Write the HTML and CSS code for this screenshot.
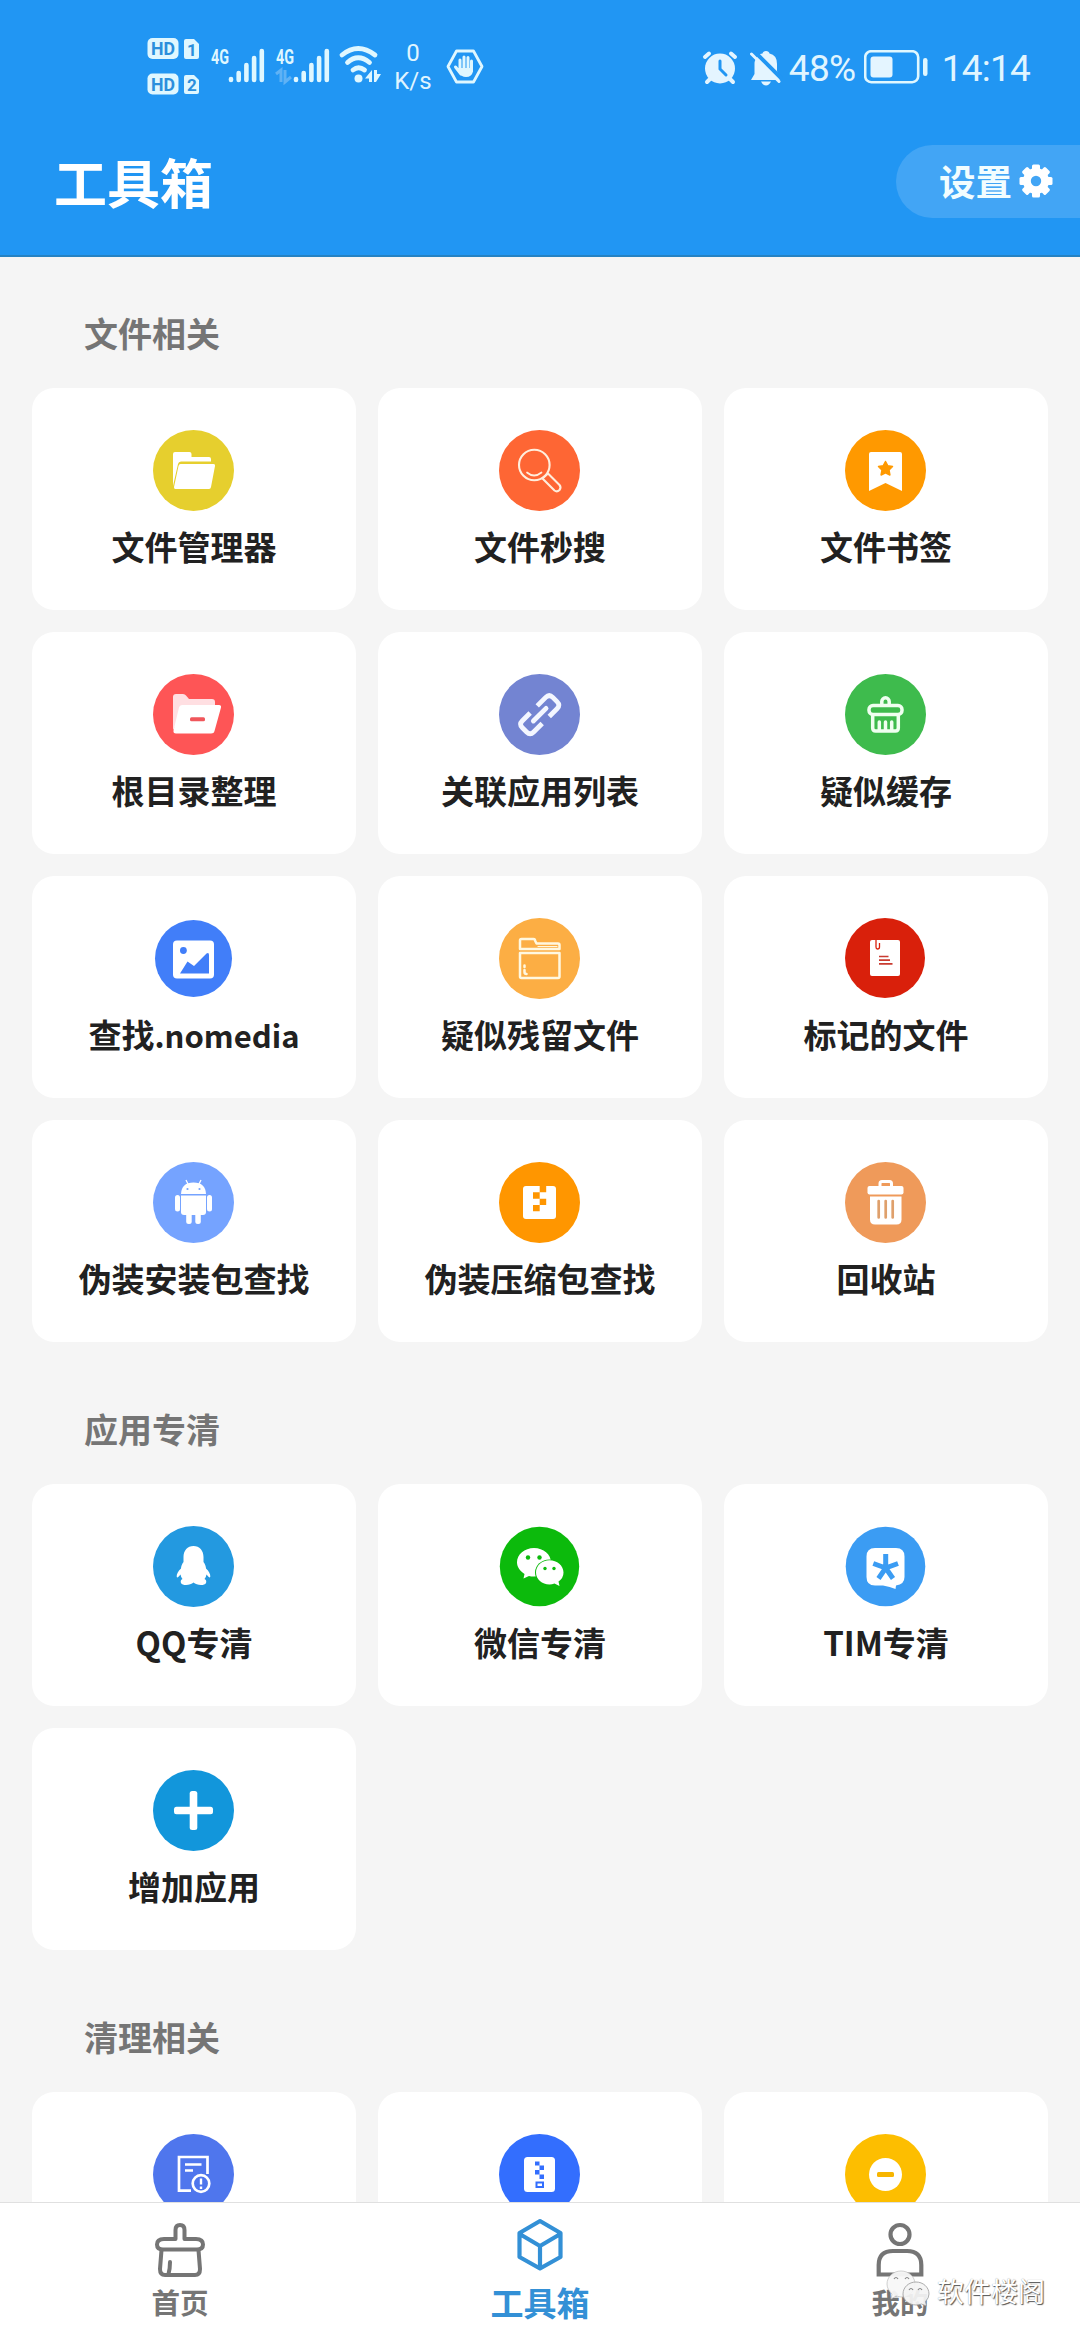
FILE: index.html
```html
<!DOCTYPE html>
<html lang="zh-CN">
<head>
<meta charset="utf-8">
<title>工具箱</title>
<link rel="stylesheet" href="styles.css">
</head>
<body>
<div class="app">
  <header class="header">
    <div class="status">
      <div class="status-left">
        <svg class="signals" width="234" height="60" viewBox="0 0 234 60">
          <g fill="#dff7ff">
            <rect x="0.5" y="5" width="31" height="21" rx="5"/>
            <rect x="0.5" y="41" width="31" height="21" rx="5" transform="translate(0 -0.5)"/>
            <path d="M39 6H47L52 11V24Q52 26 50 26H39Q37 26 37 24V8Q37 6 39 6Z"/>
            <path d="M39 42H47L52 47V59Q52 61 50 61H39Q37 61 37 59V44Q37 42 39 42Z"/>
          </g>
          <g class="tiny" fill="#2b8fdc">
            <text x="4" y="22" textLength="24" lengthAdjust="spacingAndGlyphs">HD</text>
            <text x="4" y="57.500" textLength="24" lengthAdjust="spacingAndGlyphs">HD</text>
            <text x="40" y="23" class="num">1</text>
            <text x="40" y="58" class="num">2</text>
          </g>
          <g class="net" fill="#dff7ff">
            <text x="64" y="31" textLength="18" lengthAdjust="spacingAndGlyphs">4G</text>
            <text x="129" y="31" textLength="18" lengthAdjust="spacingAndGlyphs">4G</text>
          </g>
          <g stroke="#dff7ff" stroke-width="4.600" stroke-linecap="round">
            <path d="M84 47V46M91.700 47V40M99.400 47V32M107.100 47V25M114.800 47V18"/>
            <path d="M149 47V46M156.700 47V40M164.400 47V32M172.100 47V25M179.800 47V18"/>
          </g>
          <path d="M129 41L134 37V49M138 37V49L144 44" fill="none" stroke="#5fb2f5" stroke-width="3"/>
          <g fill="none" stroke="#dff7ff" stroke-width="4.800" stroke-linecap="round">
            <path d="M195 22Q211 9 228 22"/>
            <path d="M200.500 29.500Q211 20 222.500 29.500"/>
            <path d="M206 37Q211.500 32.500 217.500 37"/>
          </g>
          <circle cx="211.500" cy="45.500" r="4" fill="#dff7ff"/>
          <path d="M218 45.500L225 37V49H222V45.500ZM227 49V37H230V41H234L229 49Z" fill="#dff7ff"/>
        </svg>
        <div class="speed"><span>0</span><span>K/s</span></div>
        <svg width="38" height="38" viewBox="0 0 38 38">
          <path d="M10.500 3H27.500L36 18.500L27.500 34H10.500L2 18.500Z" fill="none" stroke="#dff7ff" stroke-width="2.800" stroke-linejoin="round"/>
          <g stroke="#dff7ff" stroke-width="3" stroke-linecap="round">
            <path d="M14 12V23M18 9V23M22 9.500V23M25.500 13V23M9.500 19L15 26"/>
          </g>
          <path d="M12.500 20H27V23Q26 29 20 29Q15 29 12.500 24Z" fill="#dff7ff"/>
        </svg>
      </div>
      <div class="status-right">
        <svg width="36" height="36" viewBox="0 0 36 36">
          <g fill="none" stroke="#e4f5ff" stroke-width="4" stroke-linecap="round"><path d="M3 7L7 3.500M33 7L29 3.500M9 28L5 32M27 28L31 32"/></g>
          <circle cx="18" cy="18.500" r="15" fill="#e4f5ff"/>
          <path d="M18 11V19L24 25" fill="none" stroke="#2196f3" stroke-width="3" stroke-linecap="round"/>
        </svg>
        <svg class="bell" width="34" height="36" viewBox="0 0 34 36">
          <path d="M9.500 5.500Q11 3.500 13.500 3.500Q14 1 17 1Q20 1 20.500 3.500Q28 5 28 14V21L31 30H2L5.500 24V14Q5.500 9 9.500 5.500ZM12 31.500H22Q20 35.500 17 35.500Q14 35.500 12 31.500Z" fill="#e4f5ff"/>
          <path d="M6 2L33 29" stroke="#2196f3" stroke-width="4"/>
          <path d="M2.500 4L30 31.500" stroke="#e4f5ff" stroke-width="3" stroke-linecap="round"/>
        </svg>
        <span class="percent">48%</span>
        <svg class="battery" width="64" height="34" viewBox="0 0 64 34">
          <rect x="1.200" y="1.200" width="53" height="31" rx="6" fill="none" stroke="#dff7ff" stroke-width="2.600"/>
          <rect x="6.500" y="6.500" width="22" height="21" rx="3" fill="#e4f5ff"/>
          <rect x="59" y="8" width="4.500" height="18" rx="2.200" fill="#dff7ff"/>
        </svg>
        <span class="clock">14:14</span>
      </div>
    </div>
    <div class="appbar">
      <h1 class="title">工具箱</h1>
      <div class="settings">
        <span>设置</span>
        <svg width="34" height="34" viewBox="-17 -17 34 34">
          <g fill="#fff">
            <path fill-rule="evenodd" d="M-13 0A13 13 0 1 1 13 0A13 13 0 1 1 -13 0ZM-5.200 0A5.200 5.200 0 1 0 5.200 0A5.200 5.200 0 1 0 -5.200 0Z"/>
            <g id="teeth"><rect x="-4" y="-16.500" width="8" height="7" rx="1.500"/><rect x="-4" y="9.500" width="8" height="7" rx="1.500"/></g>
            <use href="#teeth" transform="rotate(45)"/><use href="#teeth" transform="rotate(90)"/><use href="#teeth" transform="rotate(135)"/>
          </g>
        </svg>
      </div>
    </div>
  </header>

  <main class="content">
    <h2 class="section">文件相关</h2>
    <div class="grid">
      <div class="card">
        <svg class="icon" viewBox="0 0 81 81"><circle cx="40.500" cy="40.500" r="40.500" fill="#e6cf2e"/>
          <path d="M20 56V24Q20 22 22 22H36.500Q38.500 22 38.500 24V27H56Q58 27 58 29V31.500H28Q25.500 31.500 25 34Z" fill="#fff"/>
          <path d="M27.500 34H60.500Q62.500 34 62 36L58 57Q57.700 59 56 59H22.500Q20.700 59 21 57L25.500 36Q26 34 27.500 34Z" fill="#fff"/></svg>
        <span class="label">文件管理器</span>
      </div>
      <div class="card">
        <svg class="icon" viewBox="0 0 81 81"><circle cx="40.500" cy="40.500" r="40.500" fill="#fe6634"/>
          <g fill="none" stroke="#ffeedd" stroke-width="2.100" stroke-linecap="round" stroke-linejoin="round"><circle cx="35.300" cy="35" r="15.300"/><path d="M28 42.500Q35 48.500 42.500 42.500" stroke-width="1.700"/><path d="M49 43.500L60.500 55Q62.500 57.500 60.500 60Q58 62.500 55.500 60.500L43.500 48.500Z"/></g></svg>
        <span class="label">文件秒搜</span>
      </div>
      <div class="card">
        <svg class="icon" viewBox="0 0 81 81"><circle cx="40.500" cy="40.500" r="40.500" fill="#ff9900"/>
          <path d="M26 22H55Q57 22 57 24V61L40.500 53L24 61V24Q24 22 26 22Z" fill="#fff"/>
          <path d="M40.500 31.500L42.800 35.800L47.500 36.500L44 40L44.900 45L40.500 42.800L36.100 45L37 40L33.500 36.500L38.200 35.800Z" fill="#ff9900" stroke="#ff9900" stroke-width="1.500" stroke-linejoin="round"/></svg>
        <span class="label">文件书签</span>
      </div>
      <div class="card">
        <svg class="icon" viewBox="0 0 81 81"><circle cx="40.500" cy="40.500" r="40.500" fill="#fe5556"/>
          <path d="M20 56V23Q20 20 23 20H30Q32 20 33 21.500L36 25H59Q62 25 62 28V50H24Z" fill="#ffdfe2"/>
          <path d="M29 31H66Q68.500 31 68 33.500L61.500 57Q61 59.500 58 59.500H23Q20 59.500 20.500 56.500L26 33.500Q26.500 31 29 31Z" fill="#fff"/>
          <rect x="37" y="43.200" width="15" height="4" rx="1.500" fill="#f0565b"/></svg>
        <span class="label">根目录整理</span>
      </div>
      <div class="card">
        <svg class="icon" viewBox="0 0 81 81"><circle cx="40.500" cy="40.500" r="40.500" fill="#7384d2"/>
          <g transform="translate(40.700 40.700) rotate(-45)" fill="none" stroke="#f3f6ff" stroke-width="4.800">
            <path d="M4.500 -8H16.500Q21.500 -8 21.500 -3V3Q21.500 8 16.500 8H5.500M-4.500 8H-16.500Q-21.500 8 -21.500 3V-3Q-21.500 -8 -16.500 -8H-5.500"/><path d="M-9 0H9" stroke-linecap="round"/></g></svg>
        <span class="label">关联应用列表</span>
      </div>
      <div class="card">
        <svg class="icon" viewBox="0 0 81 81"><circle cx="40.500" cy="40.500" r="40.500" fill="#3ebb4d"/>
          <g fill="none" stroke="#effff0" stroke-width="3.500" stroke-linecap="round"><path d="M36.800 31V27.500A3.700 3.700 0 0 1 44.200 27.500V31"/><rect x="24" y="31.500" width="33" height="9" rx="4"/><path d="M27.700 42V54Q27.700 57 30.700 57H50.300Q53.300 57 53.300 54V42M34.300 48V56M40.500 48V56M46.700 48V56"/></g></svg>
        <span class="label">疑似缓存</span>
      </div>
      <div class="card">
        <svg class="icon" viewBox="0 0 81 81"><circle cx="40.500" cy="40.500" r="38.500" fill="#417ef9"/>
          <rect x="20" y="22.500" width="41" height="38" rx="4" fill="#fff"/><circle cx="30.400" cy="32.500" r="3.400" fill="#417ef9"/><path d="M27 55.500L34.500 43.500L41 48L53.500 35.500Q56 34 56 37V55.500Z" fill="#417ef9"/></svg>
        <span class="label">查找<span class="latin">.nomedia</span></span>
      </div>
      <div class="card">
        <svg class="icon" viewBox="0 0 81 81"><circle cx="40.500" cy="40.500" r="40.500" fill="#fcae44"/>
          <g fill="none" stroke="#fff8e0" stroke-width="2.500" stroke-linejoin="round" stroke-linecap="round"><path d="M21 31V22.500Q21 21 22.500 21H34.500Q36 21 36 22.500L37.500 25.500H59Q60.500 25.500 60.500 27V31Z"/><path d="M39 28.500H58" stroke-width="1.200"/><path d="M21 35H60.500V58.500Q60.500 60 59 60H22.500Q21 60 21 58.500ZM25.500 47.500V49M25.500 52V54Q25.500 56 27.500 56"/></g></svg>
        <span class="label">疑似残留文件</span>
      </div>
      <div class="card">
        <svg class="icon" viewBox="0 0 81 81"><circle cx="40" cy="40" r="40" fill="#d9200b"/>
          <rect x="25" y="22" width="30" height="36" rx="2" fill="#fff"/><path d="M31 22V29Q31 31 32.500 31Q34.500 31 34.500 29V25" fill="none" stroke="#d9200b" stroke-width="1.300"/><path d="M34 38.500H43.500M34 42.200H45M34 45.900H47.500" stroke="#c93b30" stroke-width="1.700"/></svg>
        <span class="label">标记的文件</span>
      </div>
      <div class="card">
        <svg class="icon" viewBox="0 0 81 81"><circle cx="40.500" cy="40.500" r="40.500" fill="#75a3ff"/>
          <g fill="#fff"><path d="M28 32Q28.500 20.500 40.500 20.500Q52.500 20.500 53 32Z"/><path d="M28 33.500H53V50Q53 53 50 53H31Q28 53 28 50Z"/><rect x="22" y="33" width="5" height="16.500" rx="2.500"/><rect x="54" y="33" width="5" height="16.500" rx="2.500"/><rect x="33.200" y="49" width="5.500" height="13" rx="2.500"/><rect x="42.300" y="49" width="5.500" height="13" rx="2.500"/></g><path d="M33 18L35.500 23M48 18L45.500 23" stroke="#fff" stroke-width="1.300"/><circle cx="34.500" cy="27" r="1.100" fill="#75a3ff"/><circle cx="46.500" cy="27" r="1.100" fill="#75a3ff"/></svg>
        <span class="label">伪装安装包查找</span>
      </div>
      <div class="card">
        <svg class="icon" viewBox="0 0 81 81"><circle cx="40.500" cy="40.500" r="40.500" fill="#ff9600"/>
          <rect x="24" y="24" width="33" height="33" rx="3" fill="#fff"/><path d="M40.700 23.500H47.200V30.300H40.700ZM34 30.300H40.700V36.700H34ZM40.700 36.700H47.200V43H40.700ZM34 43H40.700V49.300H34Z" fill="#ff9600"/></svg>
        <span class="label">伪装压缩包查找</span>
      </div>
      <div class="card">
        <svg class="icon" viewBox="0 0 81 81"><circle cx="40.500" cy="40.500" r="40.500" fill="#ef9a5a"/>
          <rect x="22.500" y="24" width="36" height="8.500" rx="2" fill="#fff"/><path d="M35 25V21.500Q35 19.500 37 19.500H44.500Q46.500 19.500 46.500 21.500V25" fill="none" stroke="#fff" stroke-width="3"/><path d="M25 34.500H56.500V57.500Q56.500 62.500 51.500 62.500H30Q25 62.500 25 57.500Z" fill="#fff"/><path d="M33.700 39V55.500M40.700 39V55.500M47.700 39V55.500" stroke="#dfa06c" stroke-width="2.700" stroke-linecap="round"/></svg>
        <span class="label">回收站</span>
      </div>
    </div>

    <h2 class="section">应用专清</h2>
    <div class="grid">
      <div class="card">
        <svg class="icon" viewBox="0 0 81 81"><circle cx="40.500" cy="40.500" r="40.500" fill="#2399e0"/>
          <path d="M40.500 20C46.500 20 50.500 24.500 50.500 31V36C52 38 53 40.500 53 42.500C56 45 57.500 48.500 57.300 50.500Q57 53 53.500 48.500Q53 51.500 51.500 53C53.500 54 53.500 55.500 53 57C51.500 60 43.500 59.500 40.500 56.500C37.500 59.500 29.500 60 28 57C27.500 55.500 27.500 54 29.500 53Q28 51.500 27.500 48.500Q24 53 23.700 50.500C23.500 48.500 25 45 28 42.500C28 40.500 29 38 30.500 36V31C30.500 24.500 34.500 20 40.500 20Z" fill="#fff"/></svg>
        <span class="label">QQ专清</span>
      </div>
      <div class="card">
        <svg class="icon" viewBox="0 0 81 81"><circle cx="40.500" cy="40.500" r="39.700" fill="#0cba0c"/>
          <path d="M35 22C44.500 22 52 28.500 52 36.300C52 44 44.500 50.500 35 50.500Q32 50.500 30 50L24.500 52.500L25.500 48C21 45 18 41 18 36.300C18 28.500 25.500 22 35 22Z" fill="#fff"/><ellipse cx="50.500" cy="46.500" rx="14.500" ry="13.100" fill="#0cba0c"/>
          <path d="M50.500 34.300C58 34.300 64.500 39.700 64.500 46.500Q64.500 52 59.500 55.500L60.500 60L55.500 57.500Q53 58.500 50.500 58.500C43 58.500 37 53.200 37 46.500C37 39.700 43 34.300 50.500 34.300Z" fill="#fff"/>
          <g fill="#0cba0c"><circle cx="29" cy="31.500" r="2.200"/><circle cx="40.500" cy="31.500" r="2.200"/><circle cx="46" cy="42.500" r="1.700"/><circle cx="55" cy="42.500" r="1.700"/></g></svg>
        <span class="label">微信专清</span>
      </div>
      <div class="card">
        <svg class="icon" viewBox="0 0 81 81"><circle cx="40.500" cy="40.500" r="39.800" fill="#3b9cf3"/>
          <path d="M30 22H51Q59.500 22 59.500 30.500V51Q59.500 58.500 51 59.500L50.500 63Q45 60.500 38 59.500H30Q21.500 59.500 21.500 51V30.500Q21.500 22 30 22Z" fill="#fff"/>
          <path d="M40.700 42V28M40.700 42L53 37.500M40.700 42L48 52.500M40.700 42L33.500 52.500M40.700 42L28.300 37.500" stroke="#3b9cf3" stroke-width="5"/></svg>
        <span class="label">TIM专清</span>
      </div>
      <div class="card">
        <svg class="icon" viewBox="0 0 81 81"><circle cx="40.500" cy="40.500" r="40.500" fill="#1296db"/>
          <rect x="21" y="36.700" width="39" height="7.600" rx="2.500" fill="#fff"/><rect x="36.700" y="21" width="7.600" height="39" rx="2.500" fill="#fff"/></svg>
        <span class="label">增加应用</span>
      </div>
    </div>

    <h2 class="section">清理相关</h2>
    <div class="grid">
      <div class="card">
        <svg class="icon" viewBox="0 0 81 81"><circle cx="40.500" cy="40.500" r="40.500" fill="#4f76ed"/>
          <g fill="none" stroke="#fff" stroke-width="2.700"><path d="M38 56.700H26V23H54.500V40M32 30.500H48.500M32 36.500H40"/><circle cx="48" cy="49.500" r="8.300"/><path d="M48 44.500V50.500M48 52.500V55" stroke-width="2.400"/></g></svg>
      </div>
      <div class="card">
        <svg class="icon" viewBox="0 0 81 81"><circle cx="40.500" cy="40.500" r="40.500" fill="#336efe"/>
          <rect x="25" y="23" width="31" height="35" rx="3.500" fill="#fff"/><path d="M36 27.500H40.500V31.500H36ZM40.500 31.500H45V36H40.500ZM36 36H40.500V40.500H36ZM40.500 40.500H45V45H40.500Z" fill="#336efe"/><rect x="37.500" y="48.500" width="6.500" height="4.500" fill="none" stroke="#336efe" stroke-width="2"/></svg>
      </div>
      <div class="card">
        <svg class="icon" viewBox="0 0 81 81"><circle cx="40.500" cy="40.500" r="40.500" fill="#fdbe00"/>
          <circle cx="40.500" cy="40.500" r="16.500" fill="#fff"/><rect x="32" y="38" width="17" height="5" rx="1.500" fill="#f7b500"/></svg>
      </div>
    </div>
  </main>

  <nav class="nav">
    <div class="tab">
      <svg width="54" height="56" viewBox="0 0 54 56" fill="none" stroke="#757575" stroke-width="4" stroke-linejoin="round" stroke-linecap="round">
        <path d="M22.500 17V8Q22.500 3 27 3Q31.500 3 31.500 8V17H43Q50 17 50 22.500Q50 27.500 44 27.500H10Q4 27.500 4 22.500Q4 17 11 17Z"/>
        <path d="M8.500 28L7 47Q7 53 12 53H42Q47 53 47 47L45.500 28M17 40Q17 47 15.500 52"/>
      </svg>
      <span>首页</span>
    </div>
    <div class="tab active">
      <svg width="54" height="56" viewBox="0 0 54 56" fill="none" stroke="#3390d6" stroke-width="4.200" stroke-linejoin="round" stroke-linecap="round">
        <path d="M27 -1L47.500 11V35L27 46.500L6.500 35V11ZM7.500 12.500L27 24L46.500 12.500M27 24V46"/>
      </svg>
      <span>工具箱</span>
    </div>
    <div class="tab">
      <svg width="54" height="56" viewBox="0 0 54 56" fill="none" stroke="#757575" stroke-width="4.200">
        <circle cx="27" cy="12.500" r="9.500"/><path d="M5.700 52.500V43Q5.700 29 20 29H34Q48.300 29 48.300 43V52.500Z"/>
      </svg>
      <span>我的</span>
    </div>
    <div class="watermark">
      <svg width="45" height="38" viewBox="0 0 45 38">
        <path d="M15 1C23 1 29 7 29 14C29 21 23 27 15 27L10 26L5 29L6 24C3 21 1 18 1 14C1 7 7 1 15 1Z" fill="#f8f8f8" fill-opacity=".95" stroke="#bbb" stroke-width=".7"/>
        <path d="M30 12C37 12 43 17 43 24Q43 28 39.500 31.500L40.500 36L35.500 34Q33 35 30 35C23 35 17 30 17 24C17 17 23 12 30 12Z" fill="#f4f4f4" fill-opacity=".93" stroke="#999" stroke-width=".8"/>
        <g fill="none" stroke="#888" stroke-width="1.200"><path d="M8 9Q10 6 12 9M19 9Q21 6 23 9M23 20Q25 17 27 20M32 20Q34 17 36 20"/></g>
      </svg>
      <span>软件楼阁</span>
    </div>
  </nav>
</div>
</body>
</html>
```
FILE: styles.css
```css
* {
  box-sizing: border-box;
}

body {
  margin: 0;
  background: #f5f5f5;
  font-family: "Noto Sans CJK SC", sans-serif;
}

.app {
  display: flex;
  flex-direction: column;
  width: 1080px;
  height: 2340px;
  overflow: hidden;
}

.header {
  flex: none;
  height: 257px;
  background: #2196f3;
  border-bottom: 2px solid #2582c3;
}

.status {
  display: flex;
  justify-content: space-between;
  height: 112px;
  padding: 33px 50px 0 147px;
  color: #e0f5ff;
  font-family: Roboto, sans-serif;
}

.status-left,
.status-right {
  display: flex;
  align-items: flex-start;
}

.signals {
  overflow: visible;
}

.tiny {
  font: 700 19px Roboto, sans-serif;
}

.num {
  font-size: 17px;
}

.net {
  font: 700 21px Roboto, sans-serif;
}

.speed {
  display: flex;
  flex-direction: column;
  align-items: center;
  width: 38px;
  margin: 6px 14px 0 13px;
  font-size: 24px;
  line-height: 28px;
}

.status-left > svg:last-child {
  margin-top: 15px;
}

.status-right > svg {
  margin-top: 17px;
}

.bell {
  margin-left: 11px;
}

.percent,
.clock {
  margin-top: 14px;
  font-size: 37px;
  line-height: 44px;
}

.percent {
  width: 70px;
  margin-left: 6px;
  letter-spacing: -0.7px;
}

.battery {
  margin-left: 5px;
}

.clock {
  margin-left: 14px;
  letter-spacing: -0.8px;
}

.appbar {
  display: flex;
  align-items: center;
  justify-content: space-between;
  height: 143px;
  padding-left: 54px;
}

.title {
  margin: -5px 0 0;
  color: #fff;
  font-size: 53px;
  font-weight: 700;
  line-height: 64px;
}

.settings {
  display: flex;
  align-items: center;
  gap: 7px;
  width: 184px;
  height: 73px;
  padding-left: 43px;
  margin-top: -5px;
  border-radius: 37px 0 0 37px;
  background: #42a5f5;
  color: #f2fdff;
  font-size: 36.5px;
  font-weight: 700;
  line-height: 44px;
}

.content {
  flex: 1;
  min-height: 0;
  overflow: hidden;
  padding: 0 32px;
}

.section {
  height: 142px;
  margin: 0;
  padding: 65px 0 0 52px;
  color: #757575;
  font-size: 34px;
  font-weight: 700;
  line-height: 44px;
}

.section:first-child {
  height: 131px;
  padding-top: 54px;
}

.grid {
  display: grid;
  grid-template-columns: repeat(3, 324px);
  grid-auto-rows: 222px;
  gap: 22px;
}

.card {
  display: flex;
  flex-direction: column;
  align-items: center;
  padding-top: 42px;
  border-radius: 22px;
  background: #fff;
}

.icon {
  flex: none;
  width: 81px;
  height: 81px;
  margin-right: 1px;
}

.label {
  margin-top: 15px;
  color: #212121;
  font-size: 33px;
  font-weight: 700;
  line-height: 40px;
  white-space: nowrap;
}

.latin {
  font-size: 31px;
}

.nav {
  position: relative;
  display: flex;
  flex: none;
  height: 138px;
  border-top: 1px solid #e0e0e0;
  background: #fff;
}

.tab {
  display: flex;
  flex: 1;
  flex-direction: column;
  align-items: center;
  padding-top: 19px;
  color: #757575;
  font-size: 28.5px;
  font-weight: 700;
  line-height: 44px;
}

.tab svg {
  margin-bottom: 2px;
  overflow: visible;
}

.active {
  color: #3390d6;
  font-size: 33px;
}

.watermark {
  position: absolute;
  top: 67px;
  left: 886px;
  display: flex;
  align-items: flex-start;
  gap: 6px;
  color: #fff;
  font-size: 27px;
  line-height: 41px;
  text-shadow: 1px 1px 1px #555, 0 0 1px #999;
}
```
